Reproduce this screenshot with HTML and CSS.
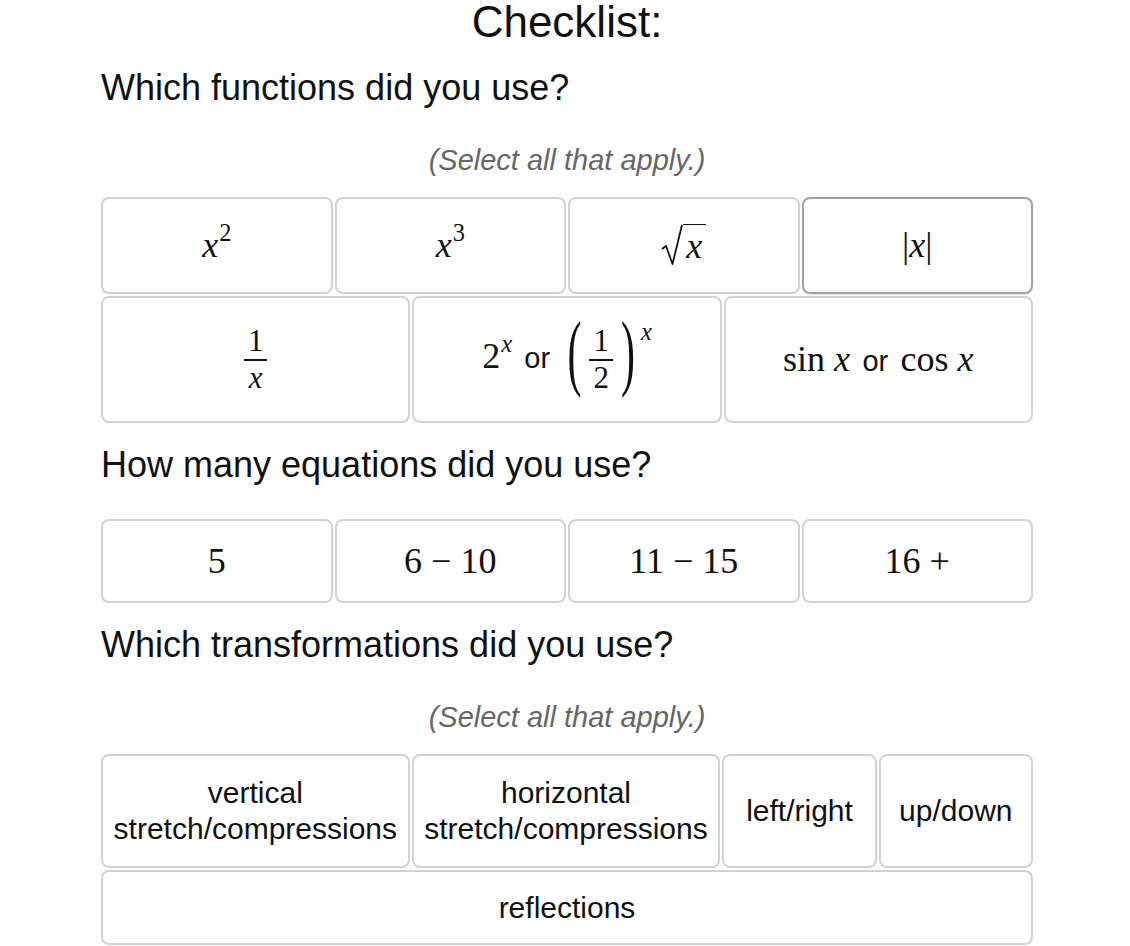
FILE: index.html
```html
<!DOCTYPE html>
<html lang="en">
<head>
    <meta charset="UTF-8">
    <meta name="viewport" content="width=device-width, initial-scale=1.0">
    <title>Checklist</title>
    <link rel="stylesheet" href="styles.css">
</head>
<body>
    <main class="checklist">
        <h1 class="title">Checklist:</h1>

        <!-- funções -->
        <section class="group first">
            <h2 class="question">Which functions did you use?</h2>
            <p class="hint">(Select all that apply.)</p>
            <div class="options">
                <div class="row row-four row-powers">
                    <button class="opt"><span class="label"><span class="math"><var>x</var><sup>2</sup></span></span></button>
                    <button class="opt"><span class="label"><span class="math"><var>x</var><sup>3</sup></span></span></button>
                    <button class="opt"><span class="label"><span class="math"><span class="sqrt"><svg class="radical" viewBox="0 0 22 42" width="22" height="42"><path d="M1 25 L5 22 L11.5 40 L21 1" fill="none" stroke="#111" stroke-width="1.8" stroke-linejoin="round"/></svg><span class="radicand"><var>x</var></span></span></span></span></button>
                    <button class="opt active"><span class="label"><span class="math">|<var>x</var>|</span></span></button>
                </div>
                <div class="row row-three row-fracs">
                    <button class="opt"><span class="label"><span class="math"><span class="frac"><span class="num">1</span><span class="den"><var>x</var></span></span></span></span></button>
                    <button class="opt"><span class="label"><span class="math">2<sup><var>x</var></sup></span> <span class="or">or</span> <span class="math"><span class="paren">(</span><span class="frac"><span class="num">1</span><span class="den">2</span></span><span class="paren">)</span><sup class="high"><var>x</var></sup></span></span></button>
                    <button class="opt"><span class="label"><span class="math">sin <var>x</var></span> <span class="or">or</span> <span class="math">cos <var>x</var></span></span></button>
                </div>
            </div>
        </section>

        <!-- quantidade de equações -->
        <section class="group">
            <h2 class="question">How many equations did you use?</h2>
            <div class="options">
                <div class="row row-four row-count">
                    <button class="opt"><span class="label math">5</span></button>
                    <button class="opt"><span class="label math">6 − 10</span></button>
                    <button class="opt"><span class="label math">11 − 15</span></button>
                    <button class="opt"><span class="label math">16 +</span></button>
                </div>
            </div>
        </section>

        <!-- transformações -->
        <section class="group">
            <h2 class="question">Which transformations did you use?</h2>
            <p class="hint">(Select all that apply.)</p>
            <div class="options">
                <div class="row row-mixed row-trans">
                    <button class="opt"><span class="label">vertical stretch/compressions</span></button>
                    <button class="opt"><span class="label">horizontal stretch/compressions</span></button>
                    <button class="opt"><span class="label">left/right</span></button>
                    <button class="opt"><span class="label">up/down</span></button>
                </div>
                <div class="row row-one row-refl">
                    <button class="opt"><span class="label">reflections</span></button>
                </div>
            </div>
        </section>
    </main>
</body>
</html>
```

FILE: styles.css
```css
* {
    box-sizing: border-box;
    margin: 0;
    padding: 0;
}

body {
    background-color: #ffffff;
    color: #111111;
    font-family: "Liberation Sans", Arial, Helvetica, sans-serif;
    padding-left: 4px;
}

.checklist {
    width: 932px;
    margin: 0 auto;
}

.title {
    font-size: 44px;
    font-weight: normal;
    line-height: 44px;
    text-align: center;
}

.question {
    font-size: 36px;
    font-weight: normal;
    line-height: 44px;
    margin-top: 20px;
    margin-bottom: 32px;
}

.group.first .question {
    margin-top: 22px;
}

.hint {
    font-size: 29px;
    font-style: italic;
    color: #666666;
    line-height: 36px;
    text-align: center;
    margin-bottom: 19px;
}

.options {
    display: flex;
    flex-direction: column;
    gap: 2px;
}

.row {
    display: grid;
    gap: 2px;
}

.row-four {
    grid-template-columns: repeat(4, 1fr);
}

.row-three {
    grid-template-columns: repeat(3, 1fr);
}

.row-mixed {
    grid-template-columns: 2fr 2fr 1fr 1fr;
}

.row-one {
    grid-template-columns: 1fr;
}

.row-powers { height: 97px; }
.row-fracs { height: 127px; }
.row-count { height: 84px; }
.row-trans { height: 114px; }
.row-refl { height: 75px; }

.opt {
    display: flex;
    align-items: center;
    justify-content: center;
    background-color: #ffffff;
    border: 2px solid #d2d2d2;
    border-radius: 8px;
    color: #111111;
    font-family: inherit;
    font-size: 30px;
    line-height: 1.2;
    text-align: center;
    padding: 0 6px;
    cursor: pointer;
}

.opt.active {
    border-color: #a4a4a4;
    box-shadow: 0 1px 2px rgba(0, 0, 0, 0.12);
}

/* notação matemática */
.math {
    font-family: "Liberation Serif", "DejaVu Serif", serif;
    font-size: 36px;
    line-height: 1;
    white-space: nowrap;
}

.math var {
    font-style: italic;
}

.math sup {
    font-size: 0.68em;
    line-height: 0;
    vertical-align: 0.65em;
    margin-left: 1px;
}

.math sup.high {
    vertical-align: 1.15em;
}

.or {
    font-size: 29px;
    margin: 0 4px;
}

.sqrt {
    display: inline-flex;
    align-items: flex-start;
    vertical-align: -6px;
}

.radical {
    display: block;
}

.radicand {
    display: block;
    border-top: 1.8px solid #111111;
    margin-top: 0.5px;
    padding: 3px 4px 0 3px;
    line-height: 1;
}

.frac {
    display: inline-flex;
    flex-direction: column;
    align-items: stretch;
    vertical-align: middle;
    font-size: 31px;
    line-height: 1.1;
    margin: 0 3px;
}

.frac .num,
.frac .den {
    text-align: center;
    padding: 0 4px;
}

.frac .num {
    border-bottom: 2px solid #111111;
}

.paren {
    display: inline-block;
    font-size: 42px;
    transform: scaleY(2);
    margin: 0 5px;
    vertical-align: 0.05em;
}
```
